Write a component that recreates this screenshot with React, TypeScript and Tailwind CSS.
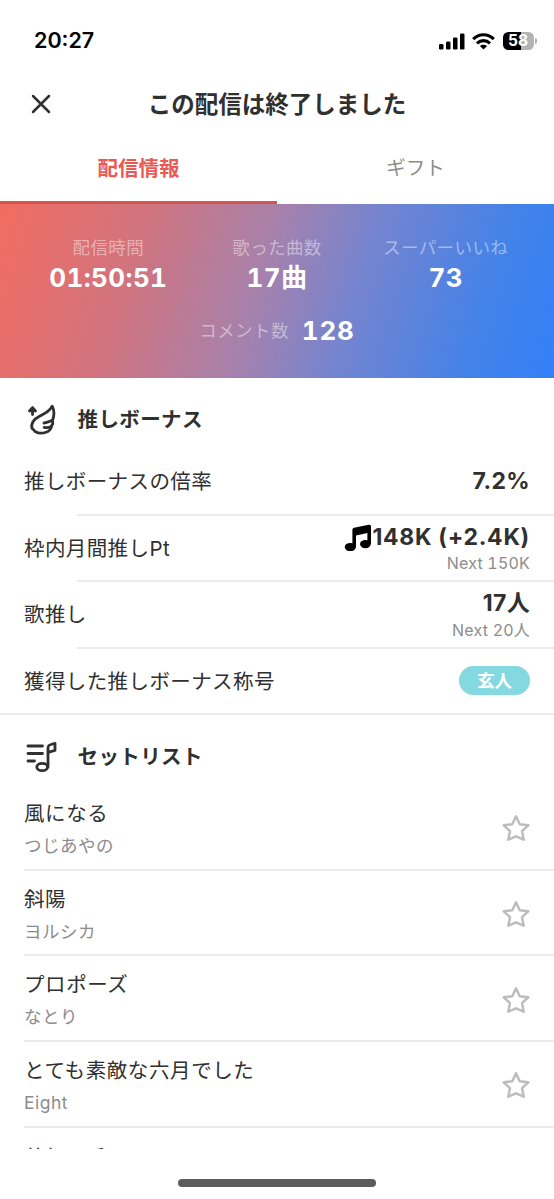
import type { ReactNode } from "react";

const songs = [
  { title: "風になる", artist: "つじあやの" },
  { title: "斜陽", artist: "ヨルシカ" },
  { title: "プロポーズ", artist: "なとり" },
  { title: "とても素敵な六月でした", artist: "Eight" },
];

const StatusBar = () => (
  <div className="flex h-[62px] items-center justify-between pt-[20px] pr-[17px] pl-[34px] text-black">
    <span className="font-[Inter] text-[21.5px] leading-none font-semibold">20:27</span>
    <div className="flex items-center">
      <svg className="h-[17px] w-[26px]" viewBox="0 0 26 17" fill="currentColor">
        <rect x="0" y="11" width="4.5" height="5.5" rx="1.3" />
        <rect x="7" y="8.5" width="4.5" height="8" rx="1.3" />
        <rect x="14" y="4.5" width="4.5" height="12" rx="1.3" />
        <rect x="21" y="0.5" width="4.5" height="16" rx="1.3" />
      </svg>
      <svg className="ml-[7px] h-[17px] w-[23px]" viewBox="0 0 23 17" fill="none" stroke="currentColor" strokeWidth="3.1">
        <path d="M1.2 6.1 C7 .3 16 .3 21.8 6.1" />
        <path d="M5 10.4 C8.8 6.7 14.2 6.7 18 10.4" />
        <path d="M11.5 16.5 L7.9 13.1 C10 11.4 13 11.4 15.1 13.1 Z" fill="currentColor" stroke="none" />
      </svg>
      <div className="ml-[8px] flex h-[18px] w-[31px] items-center justify-center rounded-[5.5px] bg-linear-to-r from-black from-58% to-[#b3b3b3] to-58%">
        <span className="font-[Inter] text-[15.5px] leading-none font-bold text-white">58</span>
      </div>
      <div className="ml-[1.5px] h-[6px] w-[2px] rounded-r-full bg-[#b3b3b3]" />
    </div>
  </div>
);

const Stat = ({ label, value }: { label: string; value: string }) => (
  <div className="flex flex-col items-center">
    <span className="h-[26px] text-[17.5px] leading-[26px] tracking-[0.4px] text-white/45">{label}</span>
    <span className="h-[34px] text-[26px] leading-[34px] font-bold tracking-[0.4px] text-white tabular-nums">{value}</span>
  </div>
);

const SectionTitle = ({ icon, children }: { icon: ReactNode; children: ReactNode }) => (
  <div className="flex items-center pl-[24px]">
    <div className="w-[53.5px]">{icon}</div>
    <h2 className="pt-[1px] text-[20.5px] leading-[30px] font-bold tracking-[0.4px]">{children}</h2>
  </div>
);

const BonusRow = ({ label, last, children }: { label: string; last?: boolean; children: ReactNode }) => (
  <div>
    <div className="flex h-[64.5px] items-center justify-between px-[24px]">
      <span className="pt-[2px] text-[20.5px] leading-[30px] tracking-[0.4px]">{label}</span>
      <div className="flex flex-col items-end">{children}</div>
    </div>
    <div className={last ? "h-[2px] bg-[#ebebeb]" : "ml-[77px] h-[2px] bg-[#ebebeb]"} />
  </div>
);

const Value = ({ children }: { children: ReactNode }) => (
  <span className="flex h-[27px] items-center pt-[1px] text-[23px] leading-[27px] font-bold tracking-[0.35px]">{children}</span>
);

const Next = ({ children }: { children: ReactNode }) => (
  <span className="h-[22px] text-[16px] leading-[26px] tracking-[0.2px] text-[#8c8c8c] tabular-nums">{children}</span>
);

const WingIcon = () => (
  <svg className="h-[34px] w-[34px]" viewBox="0 0 34 34" fill="none" stroke="currentColor" strokeWidth="2.8" strokeLinecap="round" strokeLinejoin="round">
    <path d="M8.5 12.5V6M5.5 9 8.5 5.6 11.5 9" />
    <path d="M28.2 4.2C25.5 9.8 21 11.3 15.5 14.2C10.5 16.8 6.8 21 7.9 26.2C9.5 27.2 10 28.6 11.5 29.8C14.5 31.5 18.5 31.5 22 30.3C25 29.3 27 27.4 27.4 24.4C28.8 22.4 29.3 20.5 28.6 18.3C30.3 13.6 30.4 8.5 28.2 4.2Z" />
    <path d="M28.6 18.3C26 19.2 23 20.7 20 21M27.4 24.4C25.2 25.6 22.8 25.9 20.2 25.3" />
  </svg>
);

const SetlistIcon = () => (
  <svg className="h-[34px] w-[36px]" viewBox="0 0 36 34" fill="none" stroke="currentColor" strokeWidth="2.8" strokeLinecap="round" strokeLinejoin="round">
    <path d="M4 7H18.5M4 14.5H18.5M4 22H10.5" />
    <path d="M24 28V9.5C24 6.5 25 6 27 5.5L31 4.4V11.3L24 13.3" />
    <ellipse cx="18.2" cy="28" rx="5.4" ry="3.7" />
  </svg>
);

const NotesIcon = () => (
  <svg className="h-[28px] w-[28px]" viewBox="0 0 28 28" fill="currentColor">
    <path d="M8.4 5.6Q8.4 4 10 3.7L24.8.8Q27 .4 27 2.3V20H23.4V9L12 11.4V23H8.4Z" />
    <ellipse cx="6.3" cy="23" rx="5.6" ry="4.1" />
    <ellipse cx="21.4" cy="20.1" rx="5.4" ry="4.1" />
  </svg>
);

const StarIcon = () => (
  <svg className="h-[28px] w-[28px]" viewBox="0 0 28 28" fill="none" stroke="#bdbdbd" strokeWidth="2.5" strokeLinejoin="round">
    <path d="M14 2.3 17.7 10.2 26.3 11.3 20 17.1 21.7 25.7 14 22.3 6.3 25.7 8 17.1 1.7 11.3 10.3 10.2Z" />
  </svg>
);

export default function App() {
  return (
    <div className="flex h-[1199px] w-[554px] flex-col overflow-hidden bg-white font-[Inter,'Noto_Sans_CJK_JP',sans-serif] text-[#303030]">
      <StatusBar />

      <header className="grid h-[84px] shrink-0 grid-cols-[82px_1fr_82px] items-center">
        <svg className="ml-[31px] h-[20px] w-[20px]" viewBox="0 0 20 20" stroke="currentColor" strokeWidth="2.5" strokeLinecap="round">
          <path d="M2 2 18 18M18 2 2 18" />
        </svg>
        <h1 className="pt-[1px] text-center text-[23.5px] leading-[34px] font-bold">この配信は終了しました</h1>
      </header>

      <nav className="grid h-[58px] shrink-0 grid-cols-2 text-center text-[20.5px] leading-[45px]">
        <span className="h-full border-b-3 border-[#d95350] font-bold text-[#ec5953]">配信情報</span>
        <span className="text-[19.5px] text-[#8c8c8c]">ギフト</span>
      </nav>

      <section className="h-[174px] shrink-0 bg-[linear-gradient(107deg,#f26c61_0%,#d0747f_25%,#a881ab_46%,#7584cf_63%,#4482e8_85%,#3380f9_100%)] pt-[31px]">
        <div className="grid grid-cols-3 px-[24px]">
          <Stat label="配信時間" value="01:50:51" />
          <Stat label="歌った曲数" value="17曲" />
          <Stat label="スーパーいいね" value="73" />
        </div>
        <div className="mt-[18px] flex items-center justify-center gap-[13px]">
          <span className="pt-[1px] text-[17.5px] leading-[34px] tracking-[0.4px] text-white/45">コメント数</span>
          <span className="text-[26px] leading-[34px] font-bold tracking-[0.8px] text-white tabular-nums">128</span>
        </div>
      </section>

      <main className="h-[771px] shrink-0 overflow-hidden">
        <section className="pt-[24px]">
          <SectionTitle icon={<WingIcon />}>推しボーナス</SectionTitle>
          <div className="pt-[13px]">
            <BonusRow label="推しボーナスの倍率">
              <Value>7.2%</Value>
            </BonusRow>
            <BonusRow label="枠内月間推しPt">
              <Value>
                <span className="pt-[2px] text-black"><NotesIcon /></span>
                <span className="tracking-[0.7px]">148K (+2.4K)</span>
              </Value>
              <Next>Next 150K</Next>
            </BonusRow>
            <BonusRow label="歌推し">
              <Value>17人</Value>
              <Next>Next 20人</Next>
            </BonusRow>
            <BonusRow label="獲得した推しボーナス称号" last>
              <span className="flex h-[29px] w-[71px] items-center justify-center rounded-full bg-[#84d8df] pt-px text-[17.5px] font-bold text-white">玄人</span>
            </BonusRow>
          </div>
        </section>

        <section className="pt-[24px]">
          <SectionTitle icon={<SetlistIcon />}>セットリスト</SectionTitle>
          <ul className="pt-[12px]">
            {songs.map((song) => (
              <li key={song.title} className="ml-[24px] flex h-[85.7px] items-center justify-between border-b-2 border-[#ebebeb] pt-[3px] pr-[24px]">
                <div className="pt-[2px]">
                  <p className="text-[20.5px] leading-[32px] tracking-[0.6px]">{song.title}</p>
                  <p className="text-[17.5px] leading-[31px] tracking-[0.5px] text-[#8c8c8c]">{song.artist}</p>
                </div>
                <StarIcon />
              </li>
            ))}
            <li className="ml-[24px] pt-[13px] text-[20.5px] leading-[32px] tracking-[0.4px]">サヒーチ</li>
          </ul>
        </section>
      </main>

      <div className="mx-auto mt-[30px] h-[8px] w-[198px] shrink-0 rounded-full bg-[#5c5c5c]" />
    </div>
  );
}
